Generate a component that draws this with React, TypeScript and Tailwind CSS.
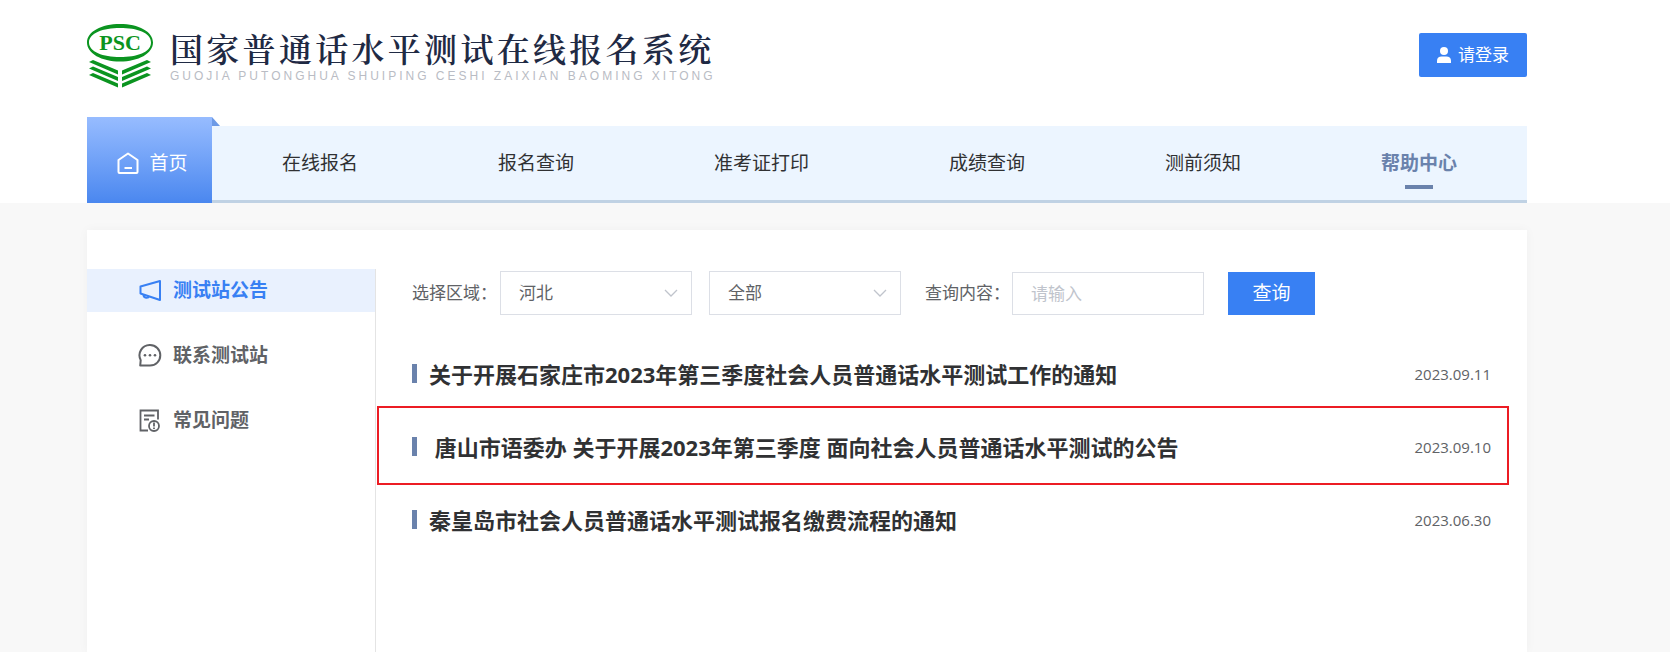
import React from "react";

const NAV = ["在线报名", "报名查询", "准考证打印", "成绩查询", "测前须知", "帮助中心"];

const NOTICES = [
  { title: "关于开展石家庄市2023年第三季度社会人员普通话水平测试工作的通知", date: "2023.09.11", marked: false },
  { title: " 唐山市语委办 关于开展2023年第三季度 面向社会人员普通话水平测试的公告", date: "2023.09.10", marked: true },
  { title: "秦皇岛市社会人员普通话水平测试报名缴费流程的通知", date: "2023.06.30", marked: false },
];

function Logo() {
  return (
    <svg viewBox="0 0 66 64" className="h-16 w-[66px] shrink-0" aria-label="PSC">
      <path
        fill="#0b9420"
        fillRule="evenodd"
        d="M33 0C51.500 0 66 7.500 66 18.500S51.500 37.500 33 37.500 0 29.500 0 18.500 14.500 0 33 0ZM33 4C16 4 2 9 2 18.500S16 33 33 33 64 28.500 64 18.500 50 4 33 4Z"
      />
      <text x="33" y="25.500" textAnchor="middle" fontSize="22" fontWeight="700" fill="#0b9420" fontFamily="Liberation Serif, serif">
        PSC
      </text>
      <g fill="#0b9420">
        <path d="M2 38 6 36 31 46.500V50.500ZM2 44.500 6 42.500 31 53V57ZM2 51 6 49 31 59.500V63.500Z" />
        <path d="M64 38 60 36 35 46.500V50.500ZM64 44.500 60 42.500 35 53V57ZM64 51 60 49 35 59.500V63.500Z" />
      </g>
    </svg>
  );
}

function UserIcon() {
  return (
    <svg viewBox="0 0 14 16" className="h-4 w-[14px]" fill="currentColor">
      <circle cx="7" cy="4" r="4" />
      <path d="M0 16v-2.500C0 11 2 9.500 4.500 9.500h5C12 9.500 14 11 14 13.500V16Z" />
    </svg>
  );
}

function HomeIcon() {
  return (
    <svg viewBox="0 0 22 22" className="size-[22px]" fill="none" stroke="currentColor" strokeWidth="2" strokeLinejoin="round">
      <path d="M1.500 8 11 1.500 20.500 8V20a1 1 0 0 1-1 1h-17a1 1 0 0 1-1-1Z" />
      <path d="M7.500 16h7.500" />
    </svg>
  );
}

function HornIcon() {
  return (
    <svg viewBox="0 0 24 24" className="size-6" fill="none" stroke="currentColor" strokeWidth="2" strokeLinejoin="round">
      <path d="M2.500 7.500 22 2v19L2.500 14.500Z" />
      <path d="M5.500 15.500c0 4 5 4 5.500 1.500" />
    </svg>
  );
}

function ChatIcon() {
  return (
    <svg viewBox="0 0 24 24" className="size-6" fill="none" stroke="currentColor" strokeWidth="2" strokeLinejoin="round">
      <path d="M12 1A10.300 10.300 0 1 1 12 21.600H2.200l.5-5.500A10.300 10.300 0 0 1 12 1Z" />
      <g fill="currentColor" stroke="none">
        <circle cx="7" cy="11.300" r="1.300" />
        <circle cx="12" cy="11.300" r="1.300" />
        <circle cx="17" cy="11.300" r="1.300" />
      </g>
    </svg>
  );
}

function FaqIcon() {
  return (
    <svg viewBox="0 0 24 24" className="size-6" fill="none" stroke="currentColor" strokeWidth="1.800">
      <path d="M10 21.500H2.500V1.500h17.500v9" />
      <path d="M6 6.500h10.500M6 10.500h5" />
      <circle cx="16" cy="17" r="5" />
      <path d="M16 13.500v4M16 18.500v1.500" />
    </svg>
  );
}

const SIDE = [
  { label: "测试站公告", Icon: HornIcon },
  { label: "联系测试站", Icon: ChatIcon },
  { label: "常见问题", Icon: FaqIcon },
];

function Dropdown({ label, id, options }: { label: string; id: string; options: string[] }) {
  return (
    <div className="relative w-48">
      <select
        id={id}
        aria-label={label}
        className="h-11 w-full appearance-none border border-[#dcdfe6] bg-white pr-10 pl-[18px] text-[17px] text-[#606266]"
      >
        {options.map((o) => (
          <option key={o}>{o}</option>
        ))}
      </select>
      <svg viewBox="0 0 14 8" className="pointer-events-none absolute top-[18px] right-[14px] h-2 w-[14px]" fill="none" stroke="#c0c4cc" strokeWidth="1.300">
        <path d="M1 1 7 7 13 1" />
      </svg>
    </div>
  );
}

export default function App() {
  return (
    <div className="flex min-h-screen flex-col bg-[#f8f8f8] font-['Open_Sans','Noto_Sans_CJK_SC',sans-serif] text-[#303133]">
      <div className="bg-white pr-[143px] pl-[87px]">
        <header className="flex h-[117px] items-start justify-between">
          <div className="flex gap-[17px] pt-6">
            <Logo />
            <div className="pt-1">
              <h1 className="font-['Noto_Serif_CJK_SC','Noto_Sans_CJK_SC',serif] text-[33px] leading-10 font-semibold tracking-widest whitespace-nowrap text-[#1f2a44]">
                国家普通话水平测试在线报名系统
              </h1>
              <p className="mt-[2px] font-['Liberation_Sans',sans-serif] text-[12px] leading-3 tracking-[3px] whitespace-nowrap text-[#b9bcc4]">
                GUOJIA PUTONGHUA SHUIPING CESHI ZAIXIAN BAOMING XITONG
              </p>
            </div>
          </div>
          <button className="mt-[33px] flex h-11 w-[108px] items-center justify-center gap-[7px] rounded-xs bg-[#3880f3] text-[17px] text-white">
            <UserIcon />
            请登录
          </button>
        </header>
        <nav className="flex items-end">
          <a
            href="#home"
            className="relative flex h-[86px] w-[125px] items-center justify-center gap-[10px] bg-linear-to-b from-[#97bcff] to-[#4a87ef] pt-[6px] pl-[6px] text-[19px] text-white"
          >
            <HomeIcon />
            首页
            <svg viewBox="0 0 8 9" className="absolute top-0 left-full h-[9px] w-2" fill="#6d9ae6">
              <path d="M0 0 8 9H0Z" />
            </svg>
          </a>
          <ul className="flex h-[77px] flex-1 items-center justify-around border-b-3 border-[#c0d2e4] bg-[#ecf5ff]">
            {NAV.map((n) =>
              n === "帮助中心" ? (
                <li key={n} className="relative">
                  <a href="#help" className="text-[19px] font-bold text-[#6a82ac]">
                    {n}
                  </a>
                  <span className="absolute top-full left-1/2 mt-2 h-1 w-7 -translate-x-1/2 bg-[#6a82ac]" />
                </li>
              ) : (
                <li key={n}>
                  <a href="#nav" className="text-[19px]">
                    {n}
                  </a>
                </li>
              ),
            )}
          </ul>
        </nav>
      </div>
      <main className="mt-[27px] mr-[143px] ml-[87px] flex flex-1 bg-white pt-[39px] shadow-[0_0_10px_rgba(0,0,0,0.04)]">
        <aside className="flex w-[289px] shrink-0 flex-col gap-[22px] border-r border-[#e4e4e4]">
          {SIDE.map(({ label, Icon }, i) => (
            <a
              key={label}
              href="#side"
              className={
                i === 0
                  ? "flex h-[43px] items-center gap-[11px] bg-[#e9f1fe] pl-[51px] text-[19px] font-bold text-[#3880f3]"
                  : "flex h-[43px] items-center gap-[11px] pl-[51px] text-[19px] font-bold text-[#606266]"
              }
            >
              <Icon />
              {label}
            </a>
          ))}
        </aside>
        <section className="flex-1 pr-9 pl-9">
          <form className="flex items-center pt-[2px] text-[17px] text-[#606266]" onSubmit={(e) => e.preventDefault()}>
            <label htmlFor="province" className="w-[88px] whitespace-nowrap">
              选择区域：
            </label>
            <div className="flex gap-[17px]">
              <Dropdown id="province" label="选择区域" options={["河北", "北京"]} />
              <Dropdown id="city" label="城市" options={["全部", "石家庄"]} />
            </div>
            <label htmlFor="keyword" className="ml-6 w-[87px] whitespace-nowrap">
              查询内容：
            </label>
            <input
              id="keyword"
              placeholder="请输入"
              className="h-[43px] w-48 border border-[#dcdfe6] px-[18px] placeholder:text-[#c0c4cc]"
            />
            <button className="ml-6 h-[43px] w-[87px] bg-[#3880f3] text-[19px] text-white">查询</button>
          </form>
          <ul className="mt-[23px]">
            {NOTICES.map((n) => (
              <li key={n.date} className="relative flex h-[73px] items-center">
                <span className="mr-3 mb-[3px] h-[19px] w-[5px] bg-[#6a82ac]" />
                <a href="#notice" className="flex-1 text-[22px] font-bold whitespace-pre">
                  {n.title}
                </a>
                <time className="text-[15px] text-[#606266]">{n.date}</time>
                {n.marked && (
                  <span className="pointer-events-none absolute -top-[5px] -right-[18px] -bottom-px -left-[35px] border-2 border-[#ec1c24]" />
                )}
              </li>
            ))}
          </ul>
        </section>
      </main>
    </div>
  );
}
